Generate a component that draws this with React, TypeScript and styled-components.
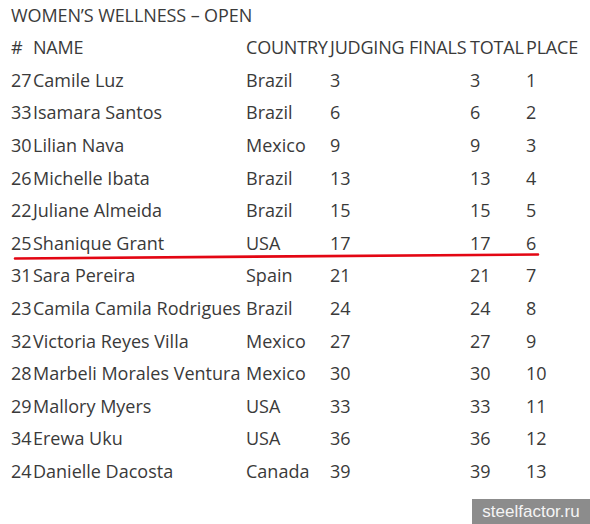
import styled, { createGlobalStyle } from "styled-components";

const GlobalStyle = createGlobalStyle`
	html, body {
		margin: 0;
		background: #ffffff;
	}
	body {
		font-family: "Open Sans", "Liberation Sans", sans-serif;
		color: #3a3a3a;
	}
`;

type Row = {
	num: number;
	name: string;
	country: string;
	judging: number;
	total: number;
	place: number;
};

const rows: Row[] = [
	{ num: 27, name: "Camile Luz", country: "Brazil", judging: 3, total: 3, place: 1 },
	{ num: 33, name: "Isamara Santos", country: "Brazil", judging: 6, total: 6, place: 2 },
	{ num: 30, name: "Lilian Nava", country: "Mexico", judging: 9, total: 9, place: 3 },
	{ num: 26, name: "Michelle Ibata", country: "Brazil", judging: 13, total: 13, place: 4 },
	{ num: 22, name: "Juliane Almeida", country: "Brazil", judging: 15, total: 15, place: 5 },
	{ num: 25, name: "Shanique Grant", country: "USA", judging: 17, total: 17, place: 6 },
	{ num: 31, name: "Sara Pereira", country: "Spain", judging: 21, total: 21, place: 7 },
	{ num: 23, name: "Camila Camila Rodrigues", country: "Brazil", judging: 24, total: 24, place: 8 },
	{ num: 32, name: "Victoria Reyes Villa", country: "Mexico", judging: 27, total: 27, place: 9 },
	{ num: 28, name: "Marbeli Morales Ventura", country: "Mexico", judging: 30, total: 30, place: 10 },
	{ num: 29, name: "Mallory Myers", country: "USA", judging: 33, total: 33, place: 11 },
	{ num: 34, name: "Erewa Uku", country: "USA", judging: 36, total: 36, place: 12 },
	{ num: 24, name: "Danielle Dacosta", country: "Canada", judging: 39, total: 39, place: 13 },
];

// Page: white sheet holding the results table
const Page = styled.div`
	position: relative;
	width: 590px;
	height: 524px;
	overflow: hidden;
	padding-left: 11px;
	box-sizing: border-box;
`;

// Title: the category heading
const Title = styled.h2`
	margin: 0;
	height: 31px;
	line-height: 31px;
	font-size: 18px;
	font-weight: 400;
	letter-spacing: -0.1px;
`;

const Table = styled.table`
	border-collapse: collapse;
	table-layout: fixed;
	font-size: 18px;
`;

const Cell = styled.td<{ $w: number }>`
	width: ${({ $w }) => $w}px;
	height: 32.6px;
	padding: 0;
	white-space: nowrap;
	vertical-align: middle;
	line-height: 1;
`;

const HeadCell = styled(Cell).attrs({ as: "th" })`
	font-weight: 400;
	text-align: left;
	letter-spacing: -0.2px;
`;

// Marker: the red hand-drawn underline over the table
const Marker = styled.svg`
	position: absolute;
	left: 0;
	top: 0;
	pointer-events: none;
`;

// Watermark: site stamp in the bottom-right corner
const Watermark = styled.div`
	position: absolute;
	right: 0;
	bottom: 0;
	width: 118px;
	height: 25px;
	background: #8c8c8c;
	color: #f4f4f4;
	font-family: "Liberation Sans", Arial, sans-serif;
	font-size: 17px;
	line-height: 25px;
	text-align: center;
`;

const widths = [22, 213, 84, 79, 61, 56, 52];

export default function App() {
	return (
		<>
			<GlobalStyle />
			<Page>
				<Title>WOMEN’S WELLNESS – OPEN</Title>
				<Table>
					<thead>
						<tr>
							{["#", "NAME", "COUNTRY", "JUDGING", "FINALS", "TOTAL", "PLACE"].map((h, i) => (
								<HeadCell key={h} $w={widths[i]}>
									{h}
								</HeadCell>
							))}
						</tr>
					</thead>
					<tbody>
						{rows.map((r) => (
							<tr key={r.num}>
								<Cell $w={widths[0]}>{r.num}</Cell>
								<Cell $w={widths[1]}>{r.name}</Cell>
								<Cell $w={widths[2]}>{r.country}</Cell>
								<Cell $w={widths[3]}>{r.judging}</Cell>
								<Cell $w={widths[4]}></Cell>
								<Cell $w={widths[5]}>{r.total}</Cell>
								<Cell $w={widths[6]}>{r.place}</Cell>
							</tr>
						))}
					</tbody>
				</Table>
				<Marker width="590" height="524">
					<path d="M15 258.5 Q 280 257 538 254.5" stroke="#e30613" strokeWidth="2.6" fill="none" strokeLinecap="round" />
				</Marker>
				<Watermark>steelfactor.ru</Watermark>
			</Page>
		</>
	);
}
